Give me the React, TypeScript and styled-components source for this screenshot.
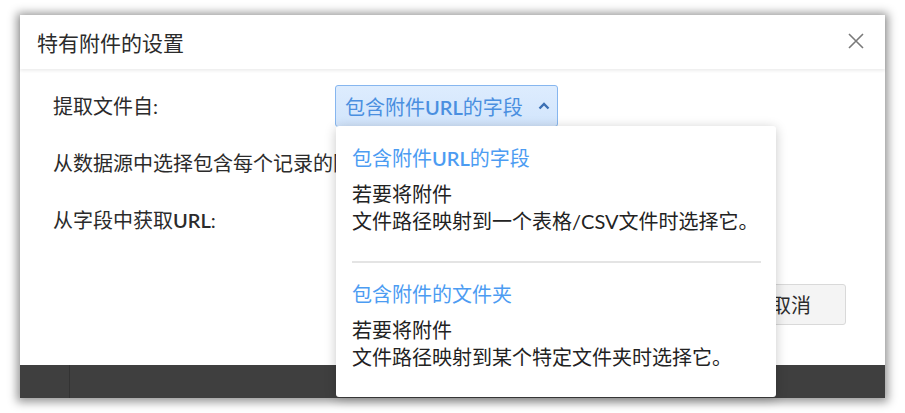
import React from 'react';
import styled, { createGlobalStyle } from 'styled-components';

const GlobalStyle = createGlobalStyle`
  html, body {
    margin: 0;
    padding: 0;
    background: #ffffff;
  }
  body {
    font-family: Lato, "Noto Sans CJK SC", sans-serif;
    color: #2b2b2b;
  }
`;

const Page = styled.div`
  padding: 15px 20px;
`;

const Dialog = styled.div`
  width: 865px;
  height: 383px;
  display: flex;
  flex-direction: column;
  background: #ffffff;
  box-shadow: 0 1px 9px 3px rgba(0, 0, 0, 0.42);
`;

const Header = styled.div`
  height: 54px;
  flex-shrink: 0;
  display: flex;
  align-items: center;
  justify-content: space-between;
  padding: 0 21px 0 17px;
  position: relative;
  z-index: 1;
  box-shadow: 0 2px 3px rgba(0, 0, 0, 0.07);
`;

const Title = styled.h1`
  margin: 0;
  font-size: 21px;
  font-weight: 400;
  color: #2b2b2b;
`;

const CloseButton = styled.button`
  display: flex;
  padding: 0;
  border: none;
  background: none;
  cursor: pointer;
  margin-top: -2px;
`;

const Body = styled.div`
  flex: 1;
  position: relative;
  padding: 16px 0 0 33px;
  font-size: 20px;
`;

const Row = styled.div<{ $gap?: number; $clip?: number }>`
  display: flex;
  align-items: center;
  margin-top: ${(p) => p.$gap ?? 0}px;
  line-height: 26px;
  white-space: nowrap;
  ${(p) => (p.$clip ? `max-width: ${p.$clip}px; overflow: hidden;` : '')}
`;

const Latin = styled.span`
  font-weight: 600;
`;

const Label = styled.span`
  width: 282px;
  flex-shrink: 0;
`;

const SelectWrap = styled.div`
  position: relative;
`;

const Select = styled.button`
  display: flex;
  align-items: center;
  gap: 15px;
  height: 42px;
  padding: 0 7px 0 9px;
  border: 1px solid #86b6ef;
  border-radius: 3px;
  background: linear-gradient(#ddecfe, #d2e5fc);
  color: #4a8fe0;
  font-family: Lato, "Noto Sans CJK SC", sans-serif;
  font-size: 20px;
  cursor: pointer;
`;

const Popover = styled.div`
  position: absolute;
  top: 41px;
  left: 1px;
  width: 440px;
  box-sizing: border-box;
  padding: 0 15px 0 16px;
  background: #ffffff;
  border-radius: 3px;
  box-shadow: 0 2px 12px rgba(0, 0, 0, 0.22);
  z-index: 5;
`;

const Option = styled.div<{ $divider?: boolean }>`
  padding: ${(p) => (p.$divider ? '19px 0 26px' : '18px 0 26px')};
  border-bottom: ${(p) => (p.$divider ? '2px solid #e4e4e4' : 'none')};
  line-height: 27px;
  white-space: nowrap;
`;

const OptionTitle = styled.div`
  font-size: 20px;
  color: #4c9cf2;
`;

const OptionText = styled.div`
  margin-top: 9px;
  font-size: 20px;
  color: #222222;
`;

const Actions = styled.div`
  display: flex;
  justify-content: flex-end;
  padding-right: 39px;
  margin-top: 51px;
`;

const Button = styled.button`
  height: 41px;
  padding: 0 34px;
  border: 1px solid #d9d9d9;
  border-radius: 3px;
  background: #f4f4f4;
  color: #2b2b2b;
  font-family: Lato, "Noto Sans CJK SC", sans-serif;
  font-size: 20px;
`;

const Footer = styled.div`
  height: 33px;
  flex-shrink: 0;
  display: flex;
  background: #3f3f3f;
`;

const FooterCell = styled.div`
  width: 49px;
  border-right: 1px solid #333333;
`;

const options = [
  {
    title: (
      <>
        包含附件<Latin>URL</Latin>的字段
      </>
    ),
    key: 'url',
    lines: ['若要将附件', '文件路径映射到一个表格/CSV文件时选择它。'],
  },
  {
    title: <>包含附件的文件夹</>,
    key: 'folder',
    lines: ['若要将附件', '文件路径映射到某个特定文件夹时选择它。'],
  },
];

const App: React.FC = () => {
  return (
    <>
      <GlobalStyle />
      <Page>
        <Dialog>
          <Header>
            <Title>特有附件的设置</Title>
            <CloseButton aria-label="关闭">
              <svg width="16" height="16" viewBox="0 0 16 16">
                <path d="M1 1 L15 15 M15 1 L1 15" stroke="#7a7a7a" strokeWidth="1.6" fill="none" />
              </svg>
            </CloseButton>
          </Header>
          <Body>
            <Row>
              <Label>提取文件自:</Label>
              <SelectWrap>
                <Select>
                  <span>
                    包含附件<Latin>URL</Latin>的字段
                  </span>
                  <svg width="12" height="8" viewBox="0 0 12 8">
                    <path d="M1.5 6.5 L6 2 L10.5 6.5" stroke="#3b6fb3" strokeWidth="2.4" fill="none" />
                  </svg>
                </Select>
                <Popover>
                  {options.map((opt, i) => (
                    <Option key={opt.key} $divider={i < options.length - 1}>
                      <OptionTitle>{opt.title}</OptionTitle>
                      <OptionText>
                        {opt.lines.map((line) => (
                          <div key={line}>{line}</div>
                        ))}
                      </OptionText>
                    </Option>
                  ))}
                </Popover>
              </SelectWrap>
            </Row>
            <Row $gap={23} $clip={283}>
              从数据源中选择包含每个记录的附件
            </Row>
            <Row $gap={31}>
              从字段中获取<Latin>URL</Latin>:
            </Row>
            <Actions>
              <Button>取消</Button>
            </Actions>
          </Body>
          <Footer>
            <FooterCell />
          </Footer>
        </Dialog>
      </Page>
    </>
  );
};

export default App;
